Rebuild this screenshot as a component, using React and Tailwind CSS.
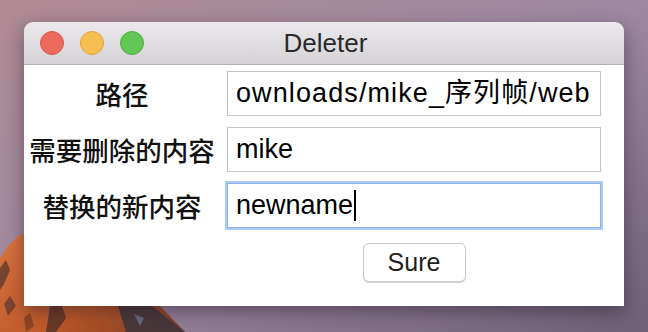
import React from "react";

const latin = { fontFamily: '"Liberation Sans", "Noto Sans CJK SC", sans-serif' };
const cjk = { fontFamily: '"Noto Sans CJK SC", "Liberation Sans", sans-serif' };

function Wallpaper() {
  return (
    <svg className="absolute inset-0" width="648" height="332" viewBox="0 0 648 332">
      <defs>
        <linearGradient id="rock" x1="0" y1="0" x2="1" y2="1">
          <stop offset="0" stopColor="#dc7740" />
          <stop offset="0.6" stopColor="#c05a2a" />
          <stop offset="1" stopColor="#7a3a22" />
        </linearGradient>
      </defs>
      <path d="M0 258 L8 246 L18 236 L40 226 L90 240 L130 280 L160 306 L185 332 L0 332 Z" fill="url(#rock)" />
      <path d="M0 268 L6 260 L10 270 L4 284 L0 290 Z" fill="#3a2a2e" opacity="0.6" />
      <path d="M4 304 L10 296 L16 306 L8 316 Z" fill="#3b2c30" opacity="0.55" />
      <path d="M50 306 L62 306 L66 318 L56 332 L46 332 Z" fill="#2f2428" opacity="0.6" />
      <path d="M118 306 L152 306 L185 332 L126 332 Z" fill="#3c3640" opacity="0.85" />
      <path d="M134 314 L144 318 L140 326 Z" fill="#6d7890" opacity="0.8" />
      <path d="M24 318 L30 313 L34 326 L26 332 Z" fill="#5a2e20" opacity="0.5" />
    </svg>
  );
}

function Field({ children, focused, wide }) {
  return (
    <div
      className={`h-[45px] bg-white flex items-center pl-[8px] pr-[6px] overflow-hidden whitespace-nowrap text-[27px] text-black ${
        focused ? "border border-[#8db4ea] ring-2 ring-[#acccf5]" : "border border-[#c4c4c4]"
      } ${wide ? "tracking-[1.1px]" : ""}`}
      style={latin}
    >
      {children}
    </div>
  );
}

export default function App() {
  const rows = [
    { label: "路径", value: "ownloads/mike_序列帧/web", wide: true },
    { label: "需要删除的内容", value: "mike" },
    { label: "替换的新内容", value: "newname", focused: true },
  ];

  return (
    <div className="relative w-[648px] h-[332px] overflow-hidden bg-gradient-to-br from-[#b08b94] via-[#9d89a1] to-[#6e6075]">
      <Wallpaper />
      <div className="relative ml-[24px] pt-[22px] w-[600px]">
        <div className="rounded-t-[9px] overflow-hidden shadow-[0_6px_18px_rgba(30,20,35,0.45)]">
          {/* title bar */}
          <div className="relative h-[43px] bg-gradient-to-b from-[#ebe9eb] to-[#d5d3d5] border-b border-[#b4b2b4] flex items-center">
            <div className="flex items-center gap-[16px] pl-[16px]">
              <span className="w-[24px] h-[24px] rounded-full bg-[#ee6a5f] border border-[#d7564c]" />
              <span className="w-[24px] h-[24px] rounded-full bg-[#f7bf4f] border border-[#dfa33a]" />
              <span className="w-[24px] h-[24px] rounded-full bg-[#62c655] border border-[#4ead43]" />
            </div>
            <div className="absolute inset-0 flex items-center justify-center text-[26px] text-[#2a2a2a] pl-[3px]" style={latin}>
              Deleter
            </div>
          </div>

          {/* content */}
          <div className="bg-white pt-[6px] pb-[24px]">
            <div className="grid grid-cols-[196px_374px] gap-x-[7px] gap-y-[11px]">
              {rows.map((r) => (
                <React.Fragment key={r.label}>
                  <div className="flex items-center justify-center text-[26.5px] font-medium text-[#111]" style={cjk}>
                    {r.label}
                  </div>
                  <Field focused={r.focused} wide={r.wide}>
                    <span>{r.value}</span>
                    {r.focused && <span className="ml-[1px] w-[2px] h-[31px] bg-black" />}
                  </Field>
                </React.Fragment>
              ))}
              <div />
              <div className="flex justify-center pt-[4px]">
                <button
                  className="w-[103px] h-[39px] rounded-[6px] bg-white border border-[#c9c9c9] shadow-[0_1px_1px_rgba(0,0,0,0.18)] text-[25px] text-[#1e1e1e]"
                  style={latin}
                >
                  Sure
                </button>
              </div>
            </div>
          </div>
        </div>
      </div>
    </div>
  );
}
